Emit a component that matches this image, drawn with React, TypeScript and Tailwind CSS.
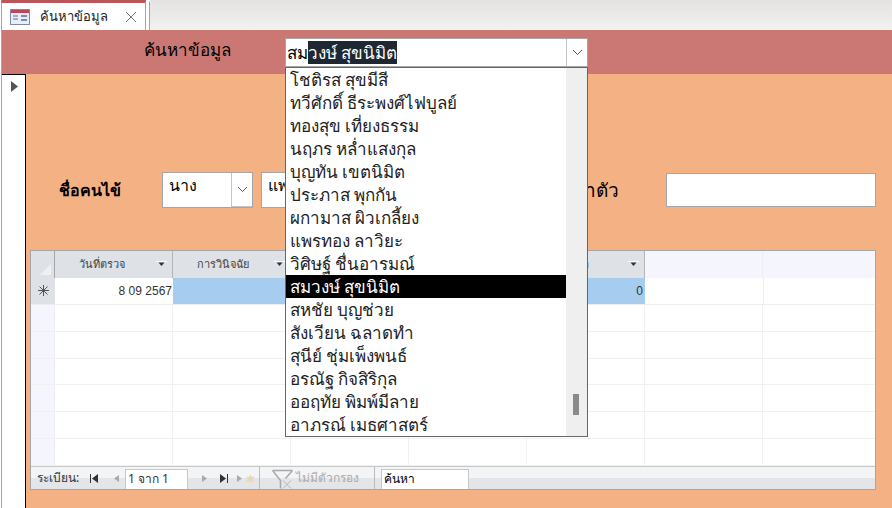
import React from 'react'

const names = [
    'โชติรส สุขมีสี',
    'ทวีศักดิ์ ธีระพงศ์ไฟบูลย์',
    'ทองสุข เที่ยงธรรม',
    'นฤภร หล่ำแสงกุล',
    'บุญทัน เขตนิมิต',
    'ประภาส พุกกัน',
    'ผกามาส ผิวเกลี้ยง',
    'แพรทอง ลาวิยะ',
    'วิศิษฐ์ ชื่นอารมณ์',
    'สมวงษ์ สุขนิมิต',
    'สหชัย บุญช่วย',
    'สังเวียน ฉลาดทำ',
    'สุนีย์ ชุ่มเพ็งพนธ์',
    'อรณัฐ กิจสิริกุล',
    'ออฤทัย พิมพ์มีลาย',
    'อาภรณ์ เมธศาสตร์',
]

const headers = ['วันที่ตรวจ', 'การวินิจฉัย', '', '', 'ตรวจซ้ำ']
const emptyRows = [0, 1, 2, 3, 4, 5]

const Chevron = () => (
    <svg width="11" height="7" viewBox="0 0 11 7" fill="none" stroke="#555" strokeWidth="1">
        <path d="M1 1l4.5 4.5L10 1" />
    </svg>
)

const SortArrow = () => (
    <svg width="11" height="6" viewBox="0 0 11 6" className="shrink-0">
        <path d="M0 .5h11" stroke="#fff" />
        <path d="M2.5 1.5h6L5.5 5z" fill="#333" />
    </svg>
)

const NavIcon = ({ d, color = '#333' }: { d: string; color?: string }) => (
    <svg width="11" height="11" viewBox="0 0 11 11" className="shrink-0">
        <path d={d} fill={color} />
    </svg>
)

const FormIcon = () => (
    <svg width="20" height="16" viewBox="0 0 20 16" className="shrink-0">
        <rect x="0.5" y="0.5" width="19" height="15" fill="#e9edf5" stroke="#7f8aa3" />
        <rect x="1" y="1" width="18" height="3" fill="#b9485a" />
        <path d="M3 7h5M3 10h5" stroke="#5a6a8a" />
        <rect x="11" y="6" width="6" height="2" fill="#7f8aa3" />
        <rect x="11" y="10" width="6" height="2" fill="#7f8aa3" />
    </svg>
)

const FilterIcon = () => (
    <svg width="21" height="20" viewBox="0 0 21 20" fill="none" className="shrink-0 mt-[2px]">
        <path d="M.5 1.5h20M.5 1.5l8 10v8M20.5 1.5l-7 8" stroke="#a8a8a8" strokeWidth="1.5" />
        <path d="M11 11.5l8 8M19 11.5l-8 8" stroke="#b4b4b4" />
    </svg>
)

export default function App() {
    return (
        <div className="relative w-[892px] h-[508px] overflow-hidden bg-white font-['Noto_Sans','Liberation_Sans',sans-serif] text-black">
            {/* tab strip */}
            <div className="flex h-[30px] ml-px bg-gradient-to-b from-[#e3e2e0] to-[#f3f2f0]">
                <div className="w-[145px] border-x border-[#a6a6a6] bg-white border-t-[3px] border-t-[#b9565a] flex items-center pl-[8px] gap-[10px]">
                    <FormIcon />
                    <span className="text-[13px] text-[#222] w-[75px] whitespace-nowrap">ค้นหาข้อมูล</span>
                    <svg width="12" height="12" viewBox="0 0 12 12" fill="none" stroke="#777" className="shrink-0">
                        <path d="M1 1l10 10M11 1L1 11" />
                    </svg>
                </div>
                <div className="w-[4px] bg-white border-r border-[#a6a6a6] border-t-[3px] border-t-white"></div>
            </div>

            <div className="h-[478px] ml-px border-l border-[#a6a6a6] flex flex-col">
                {/* form header */}
                <div className="h-[44px] bg-[#cb7875] pl-[142px] pt-[7px] text-[17px] leading-[26px]">
                    ค้นหาข้อมูล
                </div>

                {/* form detail */}
                <div className="flex-1 flex bg-[#f4b183]">
                    <div className="w-[24px] bg-white border-r border-t border-black flex justify-center items-start pt-[6px] pl-[1px]">
                        <svg width="7" height="11" viewBox="0 0 7 11"><path d="M0 0l7 5.5L0 11z" fill="#555" /></svg>
                    </div>
                    <div className="flex-1 pl-[4px] pr-[16px] flex flex-col">
                        <div className="h-[98px]"></div>
                        <div className="h-[35px] flex items-center justify-between">
                            <div className="flex items-center">
                                <span className="ml-[29px] w-[103px] text-[16px] leading-[22px] font-semibold whitespace-nowrap">ชื่อคนไข้</span>
                                <div className="w-[91px] h-[36px] bg-white border border-[#a6a6a6] pl-[6px] text-[16px] leading-[24px] relative">
                                    นาง
                                    <div className="absolute right-0 top-0 h-full w-[21px] border-l border-b border-[#c4c4c4] flex items-center justify-center">
                                        <Chevron />
                                    </div>
                                </div>
                                <div className="w-[100px] h-[36px] ml-[8px] bg-white border border-[#a6a6a6] pl-[6px] text-[16px] leading-[24px]">แพทย์</div>
                            </div>
                            <div className="flex items-center gap-[47px]">
                                <span className="text-[19px] leading-[26px] whitespace-nowrap">โรคประจำตัว</span>
                                <div className="w-[210px] h-[34px] bg-white border border-[#a6a6a6]"></div>
                            </div>
                        </div>

                        {/* datasheet */}
                        <div className="mt-[43px] h-[240px] border border-[#a6a6a6] bg-white flex flex-col">
                            <div className="flex h-[27px] bg-[#f5f6fd]">
                                <div className="w-[24px] bg-[#dee1e6] relative border-r border-[#a6a6a6]">
                                    <div className="absolute left-[9px] bottom-[3px] w-0 h-0 border-l-[11px] border-l-transparent border-b-[11px] border-b-[#eef0f4]"></div>
                                </div>
                                {headers.map((h, i) => (
                                    <div key={i} className="w-[118px] bg-[#dee1e6] border-r border-[#b5b5b5] flex items-center pl-[24px] pr-[5px] justify-between text-[11px] text-[#444]">
                                        <span className="truncate">{h}</span>
                                        <SortArrow />
                                    </div>
                                ))}
                                <div className="w-[118px] border-r border-[#eceef2]"></div>
                                <div className="flex-1"></div>
                            </div>
                            <div className="flex h-[27px] border-b border-[#eee]">
                                <div className="w-[24px] bg-[#dee1e6] flex items-center justify-center">
                                    <svg width="11" height="11" viewBox="0 0 11 11" fill="none" stroke="#555">
                                        <path d="M5.5 0v11M0 5.5h11M1.5 1.5l8 8M9.5 1.5l-8 8" />
                                    </svg>
                                </div>
                                <div className="w-[118px] text-right pr-[1px] pt-[5px] text-[12px] leading-[16px] text-[#333] font-['Liberation_Sans',sans-serif]">8 09 2567</div>
                                <div className="w-[472px] bg-[#a6cdf0] text-right pr-[2px] pt-[5px] text-[12px] leading-[16px] text-[#333] font-['Liberation_Sans',sans-serif]">0</div>
                                <div className="w-[118px] ml-px border-r border-[#eee]"></div>
                                <div className="flex-1"></div>
                            </div>
                            {emptyRows.map(r => (
                                <div key={r} className="flex h-[27px] border-b border-[#f1f1f1]">
                                    <div className="w-[24px] bg-[#f5f6fd] border-r border-[#eceef2]"></div>
                                    {[0, 1, 2, 3, 4, 5].map(c => (
                                        <div key={c} className="w-[118px] border-r border-[#f1f1f1]"></div>
                                    ))}
                                    <div className="flex-1"></div>
                                </div>
                            ))}
                            <div className="flex-1 flex items-center bg-[linear-gradient(#f3f4f6_50%,#e3e5e8_50%)] border-t border-[#c8c8c8] text-[12px] text-[#333]">
                                <span className="ml-[6px] w-[52px] whitespace-nowrap">ระเบียน:</span>
                                <NavIcon d="M1 1h1v9H1zM9 1v9L3 5.5z" />
                                <span className="w-[11px]"></span>
                                <NavIcon d="M8 2v7L3 5.5z" color="#aaa" />
                                <div className="ml-[3px] w-[63px] h-[20px] self-end bg-white border border-b-0 border-[#c8c8c8] pl-[2px] leading-[18px]">1 จาก 1</div>
                                <span className="w-[11px]"></span>
                                <NavIcon d="M3 2v7l5-3.5z" color="#aaa" />
                                <span className="w-[8px]"></span>
                                <NavIcon d="M2 1v9l6-4.5zM9 1h1v9H9z" />
                                <span className="w-[6px]"></span>
                                <NavIcon d="M2 2v7l5-3.5z" color="#aaa" />
                                <span className="text-[#ead9b0] w-[9px] leading-none text-[11px]">✱</span>
                                <div className="ml-[4px] h-full border-l border-[#bbb] flex items-center pl-[12px] gap-[3px] w-[115px] text-[#aaa]">
                                    <FilterIcon />
                                    <span className="whitespace-nowrap">ไม่มีตัวกรอง</span>
                                </div>
                                <div className="h-full border-l border-[#bbb] pl-[6px] flex items-end">
                                    <div className="w-[88px] h-[20px] bg-white border border-b-0 border-[#c8c8c8] pl-[2px] leading-[18px] text-black">ค้นหา</div>
                                </div>
                            </div>
                        </div>
                    </div>
                </div>
            </div>

            {/* combo box open over the form */}
            <div className="absolute left-[285px] top-[38px] w-[303px] h-[29px] bg-white border border-[#a6a6a6] flex items-center pl-[1px] text-[17px] leading-[23px]">
                <span>สม</span>
                <span className="bg-[#1f2733] text-white">วงษ์ สุขนิมิต</span>
                <div className="absolute right-0 top-0 h-full w-[21px] border-l border-[#c4c4c4] flex items-center justify-center">
                    <Chevron />
                </div>
            </div>
            <div className="absolute left-[285px] top-[67px] w-[303px] h-[370px] bg-white border border-[#666] flex">
                <div className="w-[280px]">
                    {names.map((n, i) => (
                        <div key={n} className={`h-[23px] leading-[23px] pl-[4px] text-[17px] whitespace-nowrap ${i === 9 ? 'bg-black text-white' : 'text-[#222]'}`}>
                            {n}
                        </div>
                    ))}
                </div>
                <div className="flex-1 bg-[#efefef] relative">
                    <div className="absolute left-[7px] top-[326px] w-[6px] h-[21px] bg-[#8a8a8a]"></div>
                </div>
            </div>
        </div>
    )
}
